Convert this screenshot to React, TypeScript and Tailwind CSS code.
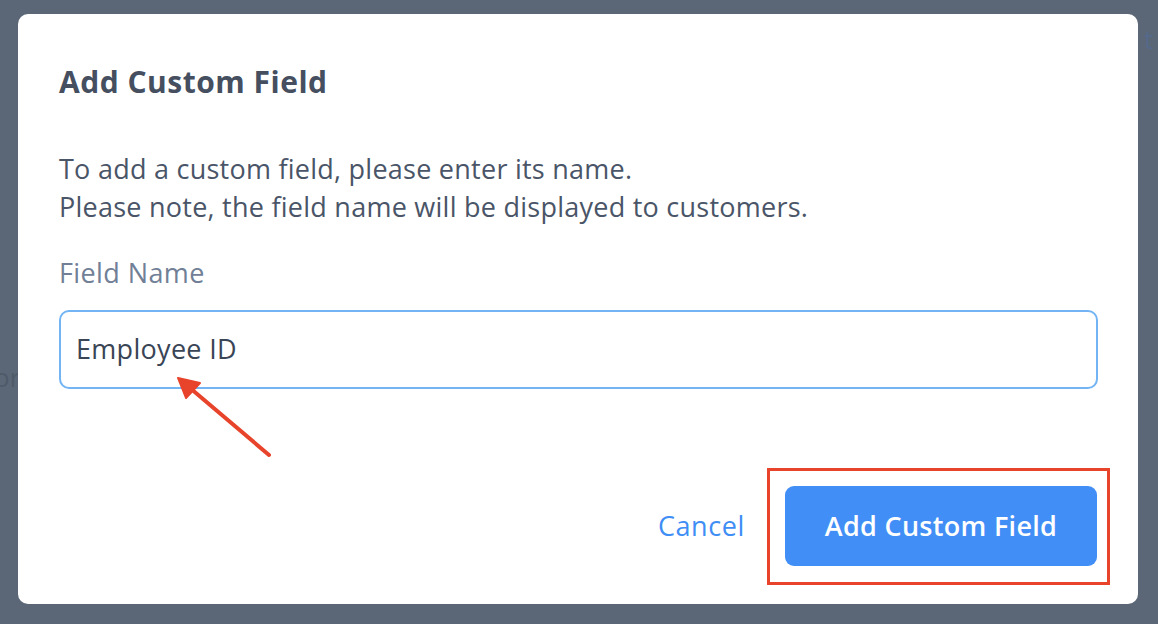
import React from "react";

export default function App() {
  return (
    <div
      className="relative w-[1158px] h-[624px] overflow-hidden bg-[#5b6777] pt-[14px] pl-[18px]"
      style={{ fontFamily: "'Open Sans', 'Noto Sans', sans-serif" }}
    >
      <span className="absolute left-[1144px] top-[20px] text-[26px] text-[#55698a]">t</span>
      <span className="absolute left-[-6px] top-[358px] text-[26px] text-[#4f5a69]">or</span>

      <div className="relative w-[1120px] h-[590px] bg-white rounded-[10px] px-[41px] flex flex-col">
        <h1 className="mt-[48px] text-[30px] leading-[40px] tracking-[0.5px] font-bold text-[#454f5f]">Add Custom Field</h1>
        <p className="mt-[48px] text-[27px] leading-[38px] tracking-[0.25px] text-[#4a5568]">
          To add a custom field, please enter its name.
          <br />
          Please note, the field name will be displayed to customers.
        </p>
        <div className="mt-[29px] text-[27px] leading-[36px] tracking-[0.4px] text-[#718096]">Field Name</div>
        <div className="mt-[19px] h-[79px] w-[1039px] rounded-[10px] border-2 border-[#72b4f4] flex items-center px-[15px] text-[27px] tracking-[0.3px] text-[#3a4556]">
          Employee ID
        </div>
        <div className="mt-[97px] flex items-center justify-end gap-[40px]">
          <span className="text-[27px] tracking-[0.6px] text-[#3f8ef5]">Cancel</span>
          <div className="w-[312px] h-[80px] rounded-[9px] bg-[#418ef6] flex items-center justify-center text-[27px] tracking-[0.3px] font-semibold text-white">
            Add Custom Field
          </div>
        </div>
      </div>

      <div className="absolute left-[767px] top-[468px] w-[343px] h-[117px] border-[3px] border-[#e8432b]" />

      <svg className="absolute left-0 top-0" width="1158" height="624" viewBox="0 0 1158 624">
        <line x1="269" y1="455" x2="190" y2="388" stroke="#e8432b" strokeWidth="4" strokeLinecap="round" />
        <polygon points="178,378 200,383 186,398" fill="#e8432b" stroke="#e8432b" strokeWidth="2" strokeLinejoin="round" />
      </svg>
    </div>
  );
}
